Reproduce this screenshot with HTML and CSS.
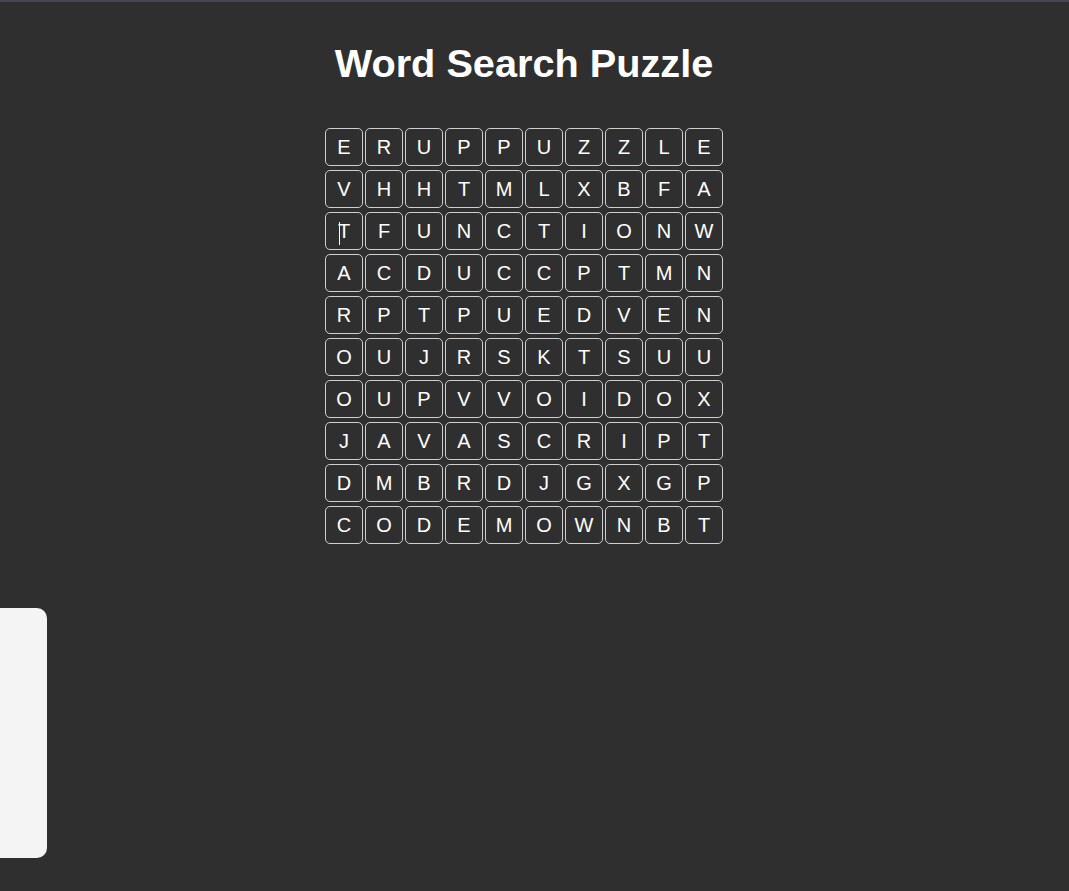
FILE: index.html
```html
<!DOCTYPE html>
<html>
<head>
<meta charset="utf-8">
<link rel="stylesheet" href="styles.css">
</head>
<body>
<div class="topbar"></div>
<main class="page">
  <h1 class="title">Word Search Puzzle</h1>
  <div class="grid">
    <div class="cell">E</div><div class="cell">R</div><div class="cell">U</div><div class="cell">P</div><div class="cell">P</div><div class="cell">U</div><div class="cell">Z</div><div class="cell">Z</div><div class="cell">L</div><div class="cell">E</div>
    <div class="cell">V</div><div class="cell">H</div><div class="cell">H</div><div class="cell">T</div><div class="cell">M</div><div class="cell">L</div><div class="cell">X</div><div class="cell">B</div><div class="cell">F</div><div class="cell">A</div>
    <div class="cell caret-cell">T<span class="caret"></span></div><div class="cell">F</div><div class="cell">U</div><div class="cell">N</div><div class="cell">C</div><div class="cell">T</div><div class="cell">I</div><div class="cell">O</div><div class="cell">N</div><div class="cell">W</div>
    <div class="cell">A</div><div class="cell">C</div><div class="cell">D</div><div class="cell">U</div><div class="cell">C</div><div class="cell">C</div><div class="cell">P</div><div class="cell">T</div><div class="cell">M</div><div class="cell">N</div>
    <div class="cell">R</div><div class="cell">P</div><div class="cell">T</div><div class="cell">P</div><div class="cell">U</div><div class="cell">E</div><div class="cell">D</div><div class="cell">V</div><div class="cell">E</div><div class="cell">N</div>
    <div class="cell">O</div><div class="cell">U</div><div class="cell">J</div><div class="cell">R</div><div class="cell">S</div><div class="cell">K</div><div class="cell">T</div><div class="cell">S</div><div class="cell">U</div><div class="cell">U</div>
    <div class="cell">O</div><div class="cell">U</div><div class="cell">P</div><div class="cell">V</div><div class="cell">V</div><div class="cell">O</div><div class="cell">I</div><div class="cell">D</div><div class="cell">O</div><div class="cell">X</div>
    <div class="cell">J</div><div class="cell">A</div><div class="cell">V</div><div class="cell">A</div><div class="cell">S</div><div class="cell">C</div><div class="cell">R</div><div class="cell">I</div><div class="cell">P</div><div class="cell">T</div>
    <div class="cell">D</div><div class="cell">M</div><div class="cell">B</div><div class="cell">R</div><div class="cell">D</div><div class="cell">J</div><div class="cell">G</div><div class="cell">X</div><div class="cell">G</div><div class="cell">P</div>
    <div class="cell">C</div><div class="cell">O</div><div class="cell">D</div><div class="cell">E</div><div class="cell">M</div><div class="cell">O</div><div class="cell">W</div><div class="cell">N</div><div class="cell">B</div><div class="cell">T</div>
  </div>
</main>
<aside class="sidepanel"></aside>
</body>
</html>
```
FILE: styles.css
```css
html, body {
  margin: 0;
  padding: 0;
  background: #2f2f2f;
  height: 100%;
  overflow: hidden;
  font-family: "Liberation Sans", Arial, sans-serif;
}

.topbar {
  height: 2px;
  background: #47455a;
}

.page {
  width: 1048px;
  display: flex;
  flex-direction: column;
  align-items: center;
}

.title {
  margin: 38px 0 0 0;
  font-size: 39.7px;
  line-height: 46px;
  font-weight: bold;
  color: #ffffff;
}

.grid {
  margin-top: 42px;
  display: grid;
  grid-template-columns: repeat(10, 38px);
  grid-auto-rows: 38px;
  column-gap: 2px;
  row-gap: 4px;
}

.cell {
  box-sizing: border-box;
  border: 1px solid #cfcfcf;
  border-radius: 5px;
  display: flex;
  align-items: center;
  justify-content: center;
  color: #ffffff;
  font-size: 20px;
}

.caret-cell {
  position: relative;
}

.caret {
  position: absolute;
  left: 13px;
  top: 9px;
  width: 1px;
  height: 23px;
  background: #ffffff;
}

.sidepanel {
  position: fixed;
  left: 0;
  top: 608px;
  width: 47px;
  height: 250px;
  background: #f4f4f4;
  border-radius: 0 10px 10px 0;
}
```
